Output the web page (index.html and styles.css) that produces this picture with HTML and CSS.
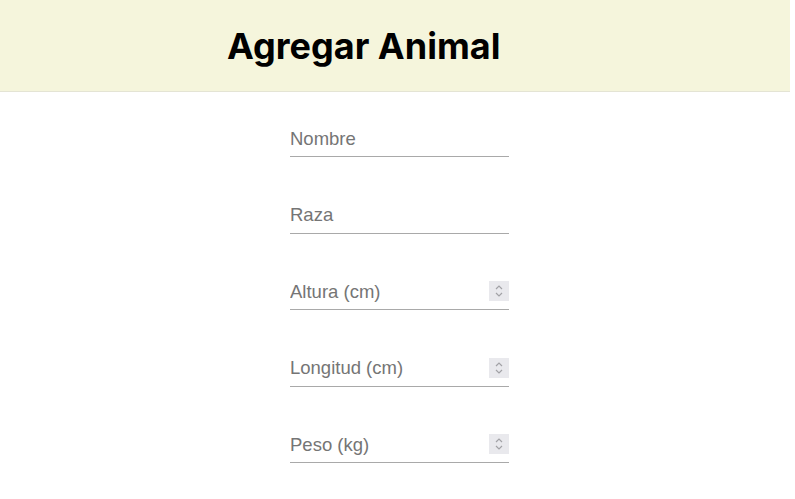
FILE: index.html
```html
<!DOCTYPE html>
<html lang="es">
<head>
<meta charset="utf-8">
<title>Agregar Animal</title>
<link rel="stylesheet" href="styles.css">
</head>
<body>
<header class="topbar">
  <h1 class="title">Agregar Animal</h1>
</header>
<main class="content">
  <form class="form">
    <label class="field">
      <input class="input" type="text" placeholder="Nombre">
    </label>
    <label class="field">
      <input class="input" type="text" placeholder="Raza">
    </label>
    <label class="field">
      <input class="input" type="number" placeholder="Altura (cm)">
      <span class="spin"><svg width="20" height="20" viewBox="0 0 20 20"><path d="M7 8 L10 5 L13 8 M7 12 L10 15 L13 12" fill="none" stroke="#a2a2a6" stroke-width="1.2"/></svg></span>
    </label>
    <label class="field">
      <input class="input" type="number" placeholder="Longitud (cm)">
      <span class="spin"><svg width="20" height="20" viewBox="0 0 20 20"><path d="M7 8 L10 5 L13 8 M7 12 L10 15 L13 12" fill="none" stroke="#a2a2a6" stroke-width="1.2"/></svg></span>
    </label>
    <label class="field">
      <input class="input" type="number" placeholder="Peso (kg)">
      <span class="spin"><svg width="20" height="20" viewBox="0 0 20 20"><path d="M7 8 L10 5 L13 8 M7 12 L10 15 L13 12" fill="none" stroke="#a2a2a6" stroke-width="1.2"/></svg></span>
    </label>
  </form>
</main>
</body>
</html>
```
FILE: styles.css
```css
html, body {
  margin: 0;
  padding: 0;
  background: #ffffff;
}
body {
  font-family: "Liberation Sans", Arial, sans-serif;
}
.topbar {
  width: 790px;
  height: 91px;
  background: #f5f5dc;
  border-bottom: 1px solid #e4e4d4;
  display: flex;
  align-items: center;
}
.title {
  margin: 0 0 0 227px;
  font-family: "Inter", sans-serif;
  font-weight: 700;
  font-size: 36px;
  color: #000;
  line-height: 1;
}
.content {
  display: flex;
  justify-content: center;
  padding-left: 4px;
}
.form {
  display: flex;
  flex-direction: column;
  gap: 39px;
  padding-top: 27.5px;
  width: 219px;
}
.field {
  display: flex;
  align-items: center;
  padding: 8px 0 7.5px 0;
  border-bottom: 1px solid #a9a9a9;
}
.input {
  flex: 1;
  min-width: 0;
  font-family: "Liberation Sans", Arial, sans-serif;
  font-size: 18.5px;
  line-height: 21px;
  height: 21px;
  border: none;
  padding: 0;
  margin: 0;
  outline: none;
  background: transparent;
  color: #333;
  -moz-appearance: textfield;
}
.input::-webkit-outer-spin-button,
.input::-webkit-inner-spin-button {
  -webkit-appearance: none;
  margin: 0;
}
.input::placeholder {
  color: #757575;
}
.spin {
  flex: none;
  width: 20px;
  height: 20px;
  background: #e9e9ed;
  display: block;
}
.spin svg {
  display: block;
}
```
